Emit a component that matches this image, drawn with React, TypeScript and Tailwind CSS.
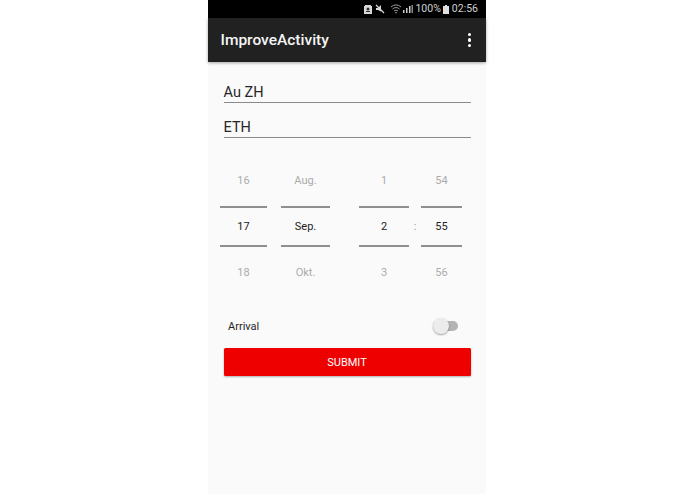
export default function App() {
  const font = { fontFamily: '"Roboto", sans-serif' };
  const Picker = ({ a, b, c, w }: { a: string; b: string; c: string; w: string }) => (
    <div className={`${w} flex flex-col items-center shrink-0`}>
      <div className="h-[46px] w-full border-b-2 border-[#8f8f8f] text-[11px] text-[#ababab] text-center leading-[13px] pt-[12px]">{a}</div>
      <div className="h-[39px] w-full border-b-2 border-[#8f8f8f] text-[11px] text-[#222222] text-center leading-[13px] pt-[12px]">{b}</div>
      <div className="w-full text-[11px] text-[#ababab] text-center leading-[13px] pt-[19px]">{c}</div>
    </div>
  );
  return (
    <div className="w-[695px] h-[494px] bg-white flex justify-center overflow-hidden" style={font}>
      <div className="w-[278px] h-[494px] mr-[1px] bg-[#fafafa] flex flex-col">
        <div className="h-[18px] bg-black flex items-center justify-end pr-[8px] text-[#d0d0d0] text-[10.5px]">
          <svg width="8" height="9" viewBox="0 0 8 9" className="mr-[3px]"><path d="M1 0h6v1h1v8H0V1h1z" fill="#d8d8d8"/><circle cx="4" cy="4" r="1.5" fill="#333"/><rect x="2" y="6" width="4" height="1" fill="#333"/></svg>
          <svg width="10" height="10" viewBox="0 0 10 10" className="mr-[6px]"><path d="M1 4h2l3-3v6.5L3 6H1z" fill="#d8d8d8"/><path d="M1 1l8 8" stroke="#d8d8d8" strokeWidth="1.2"/></svg>
          <svg width="10" height="10" viewBox="0 0 10 10" className="mr-[2px]"><path d="M0 3a7 7 0 0 1 10 0M1.5 5a5 5 0 0 1 7 0M3 7a3 3 0 0 1 4 0" fill="none" stroke="#999999"/><path d="M4 8h2l-1 2z" fill="#999999"/></svg>
          <svg width="10" height="10" viewBox="0 0 10 10" className="mr-[2px]"><rect x="0" y="6" width="1.5" height="3" fill="#ccc"/><rect x="3" y="4" width="1.5" height="5" fill="#ccc"/><rect x="6" y="2" width="1.5" height="7" fill="#ccc"/><rect x="8.5" y="1" width="1.5" height="8" fill="#888"/></svg>
          <span className="mr-[2px]">100%</span>
          <svg width="6" height="9" viewBox="0 0 6 9" className="mr-[3px]"><path d="M2 0h2v1h2v8H0V1h2z" fill="#e0e0e0"/></svg>
          <span>02:56</span>
        </div>
        <div className="h-[44px] bg-[#212121] shadow-[0_1px_3px_rgba(0,0,0,0.35)] flex items-center justify-between pl-[12.5px] pr-[15px] shrink-0">
          <span className="text-[#f5f5f5] text-[15.5px] font-medium pt-[2px]">ImproveActivity</span>
          <span className="flex flex-col gap-[2px]">
            <span className="w-[3.5px] h-[3.5px] rounded-full bg-white" />
            <span className="w-[3.5px] h-[3.5px] rounded-full bg-white" />
            <span className="w-[3.5px] h-[3.5px] rounded-full bg-white" />
          </span>
        </div>
        <div className="flex flex-col px-[15.5px] pt-[19px]">
          <div className="h-[22px] w-[247px] border-b border-[#8a8a8a] text-[14.5px] leading-[21px] pt-[1px] text-[#262626]">Au ZH</div>
          <div className="h-[22px] w-[247px] mt-[13px] border-b border-[#8a8a8a] text-[14.5px] leading-[21px] pt-[1px] text-[#262626]">ETH</div>
          <div className="flex ml-[-3.5px] mt-[24px] h-[135px]">
            <Picker a="16" b="17" c="18" w="w-[47px]" />
            <div className="w-[14px]" />
            <Picker a="Aug." b="Sep." c="Okt." w="w-[49px]" />
            <div className="w-[29px]" />
            <Picker a="1" b="2" c="3" w="w-[50px]" />
            <div className="w-[12px] shrink-0 pt-[58px] text-center text-[11px] leading-[13px] text-[#999999]">:</div>
            <Picker a="54" b="55" c="56" w="w-[41px]" />
          </div>
          <div className="flex items-center justify-between w-[247px] mt-[20px] h-[20px] pl-[4.5px] pr-[13px]">
            <span className="text-[11px] text-[#1f1f1f]">Arrival</span>
            <div className="relative w-[25px] h-[10px] rounded-full bg-[#b4b4b4] mt-[-2px]">
              <div className="absolute left-0 top-[-3px] w-[16px] h-[16px] rounded-full bg-[#ececec] shadow-[0_1px_2px_rgba(0,0,0,0.35)]" />
            </div>
          </div>
          <div className="mt-[11px] h-[28px] w-[247px] rounded-[1.5px] bg-[#ee0000] shadow-[0_1px_2px_rgba(0,0,0,0.3)] flex items-center justify-center text-white text-[11px] pt-[2px]">SUBMIT</div>
        </div>
      </div>
    </div>
  );
}
